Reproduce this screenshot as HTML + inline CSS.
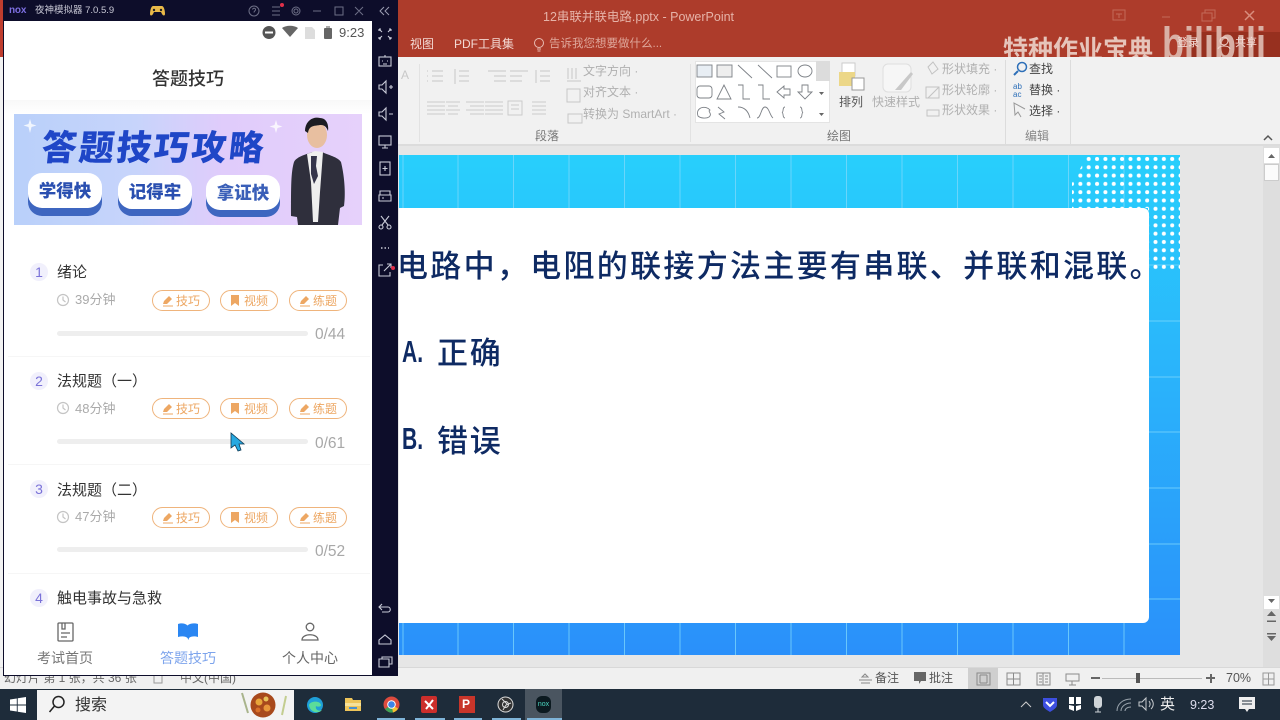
<!DOCTYPE html>
<html lang="zh"><head><meta charset="utf-8"><title>PowerPoint</title>
<style>
*{box-sizing:border-box;margin:0;padding:0}
html,body{width:1280px;height:720px;overflow:hidden;background:#e6e6e6;font-family:"Liberation Sans","Noto Sans CJK SC",sans-serif}
.a{position:absolute;white-space:nowrap}
svg{position:absolute;overflow:visible}
.rt{color:#b0b0b0;font-size:12px;line-height:16px}
.rd{color:#666;font-size:12px;line-height:16px}
.num{position:absolute;left:30px;width:18px;height:18px;border-radius:50%;background:#f1f0fc;color:#7a72d8;font-size:14px;line-height:18px;text-align:center}
.ttl{position:absolute;left:57px;font-size:15px;line-height:20px;color:#333}
.dur{position:absolute;left:75px;font-size:13px;line-height:18px;color:#aaa}
.pill{position:absolute;width:58px;height:21px;border:1px solid #efb47c;border-radius:11px;color:#eda763;font-size:12px;line-height:20px;padding-left:23px;background:#fff}
.bar{position:absolute;left:57px;width:251px;height:5px;border-radius:3px;background:#eee}
.cnt{position:absolute;left:315px;font-size:15.5px;line-height:18px;color:#a8a8a8}
.sep{position:absolute;left:8px;width:362px;height:1px;background:#f6f6f6}
.tab{position:absolute;top:648px;font-size:14px;line-height:20px;text-align:center;width:90px;color:#777}
.sl{position:absolute;white-space:nowrap;font-weight:500;color:#0e2a63;font-family:'Noto Sans CJK SC','Liberation Sans',sans-serif}
.ltr{position:absolute;white-space:nowrap;left:402px;font-size:31px;line-height:46px;font-weight:700;color:#0e2a63;font-family:'Liberation Sans',sans-serif;transform:scaleX(.68);transform-origin:left center}
</style></head><body>

<!-- PowerPoint title bar -->
<div class="a" style="left:0;top:0;width:1280px;height:57px;background:#ad3c2b"></div>
<div class="a" style="left:1190px;top:32px;width:90px;height:25px;background:#97301f"></div>
<div class="a" style="left:543px;top:8px;font-size:12.5px;line-height:18px;color:#e6b3a8">12串联并联电路.pptx - PowerPoint</div>
<div class="a" style="left:410px;top:36px;font-size:12px;line-height:16px;color:#f3d9d3">视图</div>
<div class="a" style="left:454px;top:36px;font-size:12px;line-height:16px;color:#f3d9d3">PDF工具集</div>
<svg style="left:533px;top:37px" width="12" height="15" fill="none" stroke="#e8bdb3"><circle cx="6" cy="6" r="4.5"/><path d="M4 12h4M4.5 14h3"/></svg>
<div class="a" style="left:549px;top:36px;font-size:11.5px;line-height:16px;color:#dfa79b">告诉我您想要做什么...</div>
<svg style="left:1112px;top:9px" width="160" height="16" fill="none" stroke="#c46a58" stroke-width="1"><rect x="1" y="1" width="12" height="10"/><path d="M4 5h6M7 5v4M50 8h8M90 4h10v8H90zM93 4V1h10v8h-3"/><path d="M133 2l9 9M142 2l-9 9" stroke="#d98d7e" stroke-width="1.5"/></svg>
<div class="a" style="left:1003px;top:34px;font-size:25px;line-height:32px;font-weight:700;color:#e6c4ba">特种作业宝典</div>
<div class="a" style="left:1162px;top:21px;font-size:45px;line-height:46px;font-weight:700;color:#d9b0a5;transform:scaleX(.8);transform-origin:left center">bilibili</div>
<div class="a" style="left:1177px;top:36px;font-size:11px;line-height:14px;color:#f3dcd6">登录</div>
<div class="a" style="left:1235px;top:36px;font-size:11px;line-height:14px;color:#f3dcd6">共享</div>
<svg style="left:1217px;top:36px" width="14" height="14" fill="none" stroke="#f0d6cf"><circle cx="7" cy="5" r="4"/><path d="M1 13c1-4 11-4 12 0"/></svg>

<!-- Ribbon -->
<div class="a" style="left:0;top:57px;width:1280px;height:88px;background:#f1f1f1"></div>
<div class="a" style="left:0;top:144px;width:1280px;height:2px;background:#dcdcdc"></div>
<div class="a" style="left:419px;top:64px;width:1px;height:78px;background:#e2e2e2"></div>
<div class="a" style="left:690px;top:64px;width:1px;height:78px;background:#e2e2e2"></div>
<div class="a" style="left:1005px;top:60px;width:1px;height:84px;background:#dcdcdc"></div>
<div class="a" style="left:1070px;top:60px;width:1px;height:84px;background:#dcdcdc"></div>
<div class="a" style="left:401px;top:67px;font-size:12px;line-height:16px;color:#c8c8c8">A</div>
<svg style="left:424px;top:68px" width="140" height="48" fill="none" stroke="#c6c6c6" stroke-width="1"><path d="M3 3h1M3 8h1M3 13h1M8 3h11M8 8h11M8 13h11M35 3h10M35 8h10M35 13h10M31 1v15M64 3h18M70 8h12M70 13h12M86 3h18M86 8h12M86 13h12M116 3h10M116 8h10M116 13h10M112 2v13"/><path d="M3 34h18M3 38h18M3 42h18M3 46h18M22 34h14M24 38h10M22 42h14M24 46h10M42 34h18M46 38h14M42 42h18M46 46h14M61 34h18M61 38h18M61 42h18M61 46h18M84 33h14v14H84zM87 37h8M87 41h8M108 34h14M108 38h14M108 42h14M108 46h14" stroke="#cbcbcb"/></svg>
<svg style="left:566px;top:64px" width="18" height="60" fill="none" stroke="#c6c6c6"><path d="M2 4v11M6 4v11M10 4v11M1 17h14"/><rect x="1" y="25" width="13" height="13"/><rect x="2" y="50" width="14" height="9"/></svg>
<div class="a rt" style="left:583px;top:63px">文字方向 ·</div>
<div class="a rt" style="left:583px;top:84px">对齐文本 ·</div>
<div class="a rt" style="left:583px;top:106px">转换为 SmartArt ·</div>
<div class="a rd" style="left:535px;top:128px;color:#777">段落</div>
<div class="a rd" style="left:827px;top:128px;color:#777">绘图</div>
<div class="a rd" style="left:1025px;top:128px;color:#888">编辑</div>

<!-- Shape gallery -->
<div class="a" style="left:695px;top:61px;width:135px;height:62px;background:#fff;border:1px solid #e4e4e4"></div>
<div class="a" style="left:816px;top:61px;width:14px;height:20px;background:#dcdcdc"></div>
<svg style="left:695px;top:61px" width="135" height="62" fill="none" stroke="#7c8086" stroke-width=".9"><rect x="2" y="4" width="15" height="12" fill="#e8eef4"/><rect x="22" y="4" width="15" height="12" fill="#eee"/><path d="M43 4l14 13M63 4l14 13"/><rect x="82" y="5" width="14" height="11"/><ellipse cx="110" cy="10" rx="7" ry="6"/><rect x="2" y="25" width="15" height="12" rx="3"/><path d="M29 24l-7 14h14zM43 24h5v14h7M63 24h5v14h7M82 31l7-6v3h6v6h-6v3zM107 24h6v7h4l-7 7-7-7h4z"/><path d="M3 55c-3-9 8-11 12-6-3 1 3 4-1 7-3 2-9 1-11-1zM23 46l6 5-5 2 6 5M43 46c6 0 10 3 12 11M62 57c4 0 4-11 8-11s5 9 8 11M90 46c-3 0-1 5-3 5.500 2 .5 0 5.500 3 5.500M105 46c3 0 1 5 3 5.500-2 .5 0 5.500-3 5.500"/><path d="M124 31h5l-2.500 3zM124 52h5l-2.500 3z" fill="#666" stroke="none"/></svg>

<svg style="left:836px;top:62px" width="30" height="30"><rect x="6" y="1" width="13" height="13" fill="#fff" stroke="#ccc"/><rect x="3" y="10" width="16" height="14" fill="#ecd788"/><rect x="16" y="16" width="12" height="12" fill="#fff" stroke="#999"/></svg>
<div class="a rd" style="left:839px;top:94px;color:#555">排列</div>
<svg style="left:881px;top:62px" width="34" height="32" fill="none"><rect x="2" y="2" width="28" height="28" rx="5" fill="#f6f6f6" stroke="#dedede"/><path d="M14 28L30 10l2 2-12 16z" fill="#c8c8c8"/></svg>
<div class="a rt" style="left:872px;top:94px">快速样式</div>
<svg style="left:924px;top:60px" width="18" height="58" fill="none" stroke="#c3c3c3"><path d="M4 7l5-5 5 7-6 5zM2 27h13v11H2zM4 38L15 27M3 50h12v6H3z"/></svg>
<div class="a rt" style="left:942px;top:61px">形状填充 ·</div>
<div class="a rt" style="left:942px;top:82px">形状轮廓 ·</div>
<div class="a rt" style="left:942px;top:102px">形状效果 ·</div>
<svg style="left:1011px;top:60px" width="18" height="60" fill="none"><circle cx="11" cy="7" r="4.500" stroke="#2d6fb8" stroke-width="1.500"/><path d="M7 11l-4 4" stroke="#2d6fb8" stroke-width="2"/><path d="M14 49v0L3 43v0l1 12 3-3 3 5" stroke="#999"/></svg>
<div class="a" style="left:1013px;top:83px;font-size:8px;line-height:8px;color:#2d6fb8">ab<br>ac</div>
<div class="a rd" style="left:1029px;top:61px;color:#444">查找</div>
<div class="a rd" style="left:1029px;top:82px;color:#444">替换 ·</div>
<div class="a rd" style="left:1029px;top:103px;color:#444">选择 ·</div>
<svg style="left:1262px;top:134px" width="12" height="8" fill="none" stroke="#555" stroke-width="1.500"><path d="M2 6l4-4 4 4"/></svg>

<!-- Workspace / slide -->
<div class="a" style="left:0;top:146px;width:1280px;height:521px;background:#e6e6e6"></div>
<div class="a" style="left:399px;top:155px;width:781px;height:500px;background:linear-gradient(180deg,#28cffc 0%,#2ab6fb 40%,#2a90fa 100%)"></div>
<svg style="left:399px;top:155px" width="781" height="500" stroke="#7fd8fb" stroke-width="1" stroke-opacity=".75" fill="none">
<path d="M4 0v500M59 0v500M114.500 0v500M170 0v500M225.500 0v500M281 0v500M336.500 0v500M392 0v500M447.500 0v500M503 0v500M558.500 0v500M614 0v500M669.500 0v500M725 0v500"/>
<path d="M750 110h31M750 166h31M750 222h31M750 277h31M750 333h31M750 389h31M750 444h31"/>
</svg>
<svg style="left:1068px;top:155px" width="112" height="120" fill="#fff">
<defs><pattern id="dots" width="8.350" height="8.300" patternUnits="userSpaceOnUse"><circle cx="4" cy="4" r="2"/></pattern>
<mask id="m"><path d="M20 0H112V116H80V53H4V28z" fill="#fff"/></mask></defs>
<rect width="112" height="120" fill="url(#dots)" mask="url(#m)"/></svg>
<div class="a" style="left:399px;top:208px;width:750px;height:415px;background:#fff;border-radius:0 6px 6px 0"></div>
<div class="sl" style="left:397px;top:241px;font-size:31px;line-height:46px;letter-spacing:2.300px">电路中，电阻的联接方法主要有串联、并联和混联。</div>
<div class="ltr" style="top:329px">A.</div>
<div class="sl" style="left:437px;top:328px;font-size:31px;line-height:46px;letter-spacing:1.700px">正确</div>
<div class="ltr" style="top:416px">B.</div>
<div class="sl" style="left:437px;top:416px;font-size:31px;line-height:46px;letter-spacing:1.700px">错误</div>

<!-- Scrollbar -->
<div class="a" style="left:1263px;top:146px;width:17px;height:521px;background:#dedede"></div>
<div class="a" style="left:1264px;top:148px;width:15px;height:15px;background:#fff"></div>
<div class="a" style="left:1264px;top:164px;width:15px;height:17px;background:#fbfbfb;border:1px solid #ccc"></div>
<div class="a" style="left:1264px;top:596px;width:15px;height:13px;background:#fff"></div>
<svg style="left:1264px;top:150px" width="15" height="500" fill="#666"><path d="M4 8l3.500-4 3.500 4zM4 449l3.500 4 3.500-4zM3 466h9l-4.500-5zM3 472h9v-1.500H3zM3 483h9v1.500H3zM3 486h9l-4.500 5z"/></svg>

<!-- Status bar -->
<div class="a" style="left:0;top:667px;width:1280px;height:22px;background:#f0f0f0;border-top:1px solid #d8d8d8"></div>
<div class="a" style="left:4px;top:671px;font-size:12px;line-height:15px;color:#666">幻灯片 第 1 张，共 36 张</div>
<div class="a" style="left:180px;top:671px;font-size:12px;line-height:15px;color:#666">中文(中国)</div>
<svg style="left:153px;top:672px" width="15" height="12" fill="none" stroke="#999"><path d="M1 1h8v10H1zM9 3h4"/></svg>
<svg style="left:858px;top:672px" width="15" height="14" fill="none" stroke="#888"><path d="M1 8h13M3 11h9M7 2l-3 3h6z"/></svg>
<div class="a rd" style="left:875px;top:670px;color:#555">备注</div>
<svg style="left:913px;top:671px" width="14" height="14"><path d="M1 1h12v9H8l-2 3v-3H1z" fill="#666"/></svg>
<div class="a rd" style="left:929px;top:670px;color:#555">批注</div>
<div class="a" style="left:968px;top:668px;width:30px;height:21px;background:#cfcfcf"></div>
<svg style="left:975px;top:671px" width="96" height="16" fill="none" stroke="#8a8a8a"><rect x="2" y="2" width="13" height="12"/><path d="M5 4v8M12 4v8M5 4h7M5 12h7"/><rect x="32" y="2" width="13" height="12"/><path d="M32 8h13M38.500 2v12"/><rect x="62" y="2" width="13" height="12"/><path d="M68 2v12M64 5h3M64 8h3M64 11h3M70 5h3M70 8h3M70 11h3"/><path d="M91 3h13v7H91zM97 10v4M94 14h7"/></svg>
<div class="a" style="left:1091px;top:677px;width:9px;height:2px;background:#666"></div>
<div class="a" style="left:1102px;top:678px;width:100px;height:1px;background:#bbb"></div>
<div class="a" style="left:1136px;top:673px;width:4px;height:10px;background:#555"></div>
<div class="a" style="left:1206px;top:677px;width:9px;height:2px;background:#666"></div>
<div class="a" style="left:1209.500px;top:673.500px;width:2px;height:9px;background:#666"></div>
<div class="a" style="left:1226px;top:670px;font-size:12.500px;line-height:16px;color:#555">70%</div>
<svg style="left:1262px;top:672px" width="14" height="14" fill="none" stroke="#999"><rect x="1" y="1" width="11" height="12"/><path d="M1 7h11M6.500 1v12"/></svg>

<!-- Taskbar -->
<div class="a" style="left:0;top:689px;width:1280px;height:31px;background:#1e2c3a"></div>
<svg style="left:10px;top:697px" width="16" height="16" fill="#fff"><path d="M0 2.500l6.800-1v6H0zM7.700 1.300L16 0v7.500H7.700zM0 8.500h6.800v6l-6.800-1zM7.700 8.500H16V16l-8.300-1.200z"/></svg>
<div class="a" style="left:37px;top:690px;width:257px;height:30px;background:#f3f3f3"></div>
<svg style="left:48px;top:695px" width="20" height="20" fill="none" stroke="#222" stroke-width="1.500"><circle cx="10.500" cy="7" r="5.500"/><path d="M6.500 11L1.500 17"/></svg>
<div class="a" style="left:75px;top:695px;font-size:16px;line-height:22px;color:#333">搜索</div>
<svg style="left:240px;top:690px" width="50" height="30"><path d="M2 3l6 20" stroke="#a9b48c" stroke-width="2" fill="none"/><circle cx="23" cy="15" r="12.500" fill="#a8491c"/><circle cx="19" cy="12" r="3.500" fill="#e8a53a"/><circle cx="27" cy="18" r="3.500" fill="#e8963a"/><circle cx="26" cy="9" r="2.500" fill="#e8c25a"/><circle cx="18" cy="20" r="2.500" fill="#d9702a"/><path d="M46 6l-4 19" stroke="#c3cd90" stroke-width="2" fill="none"/></svg>
<svg style="left:306px;top:696px" width="18" height="18"><circle cx="9" cy="9" r="8" fill="#1f9fd8"/><path d="M3 9c1-4 11-5 12 0 0 2-4 2-5 1-1 3 2 6 6 4-3 4-12 3-13-5z" fill="#5bdc9a"/></svg>
<svg style="left:345px;top:697px" width="16" height="15"><path d="M0 1h7l1 2h8v11H0z" fill="#eec55a"/><rect x="0" y="6" width="16" height="3" fill="#f6e19a"/><rect x="4" y="10" width="8" height="2" fill="#4a8fd0"/></svg>
<svg style="left:383px;top:696px" width="17" height="17"><circle cx="8.500" cy="8.500" r="8" fill="#dd4b3e"/><path d="M8.500 8.500L2 13a8 8 0 0 0 8 3.500z" fill="#3da355"/><path d="M8.500 8.500l6.500 4a8 8 0 0 1-5 4z" fill="#f3c332"/><circle cx="8.500" cy="8.500" r="3.800" fill="#3d83e8" stroke="#fff"/></svg>
<div class="a" style="left:421px;top:696px;width:16px;height:17px;background:#cc2e2b;border-radius:2px"></div>
<svg style="left:421px;top:696px" width="16" height="17" stroke="#fff" stroke-width="2" fill="none"><path d="M4 5l8 8M12 4L5 13"/></svg>
<div class="a" style="left:459px;top:696px;width:16px;height:17px;background:#c8352a;color:#fff;font-size:12px;line-height:17px;font-weight:700;padding-left:3px">P</div>
<svg style="left:497px;top:696px" width="17" height="17" fill="none" stroke="#ddd"><circle cx="8.500" cy="8.500" r="7.500" fill="#333"/><circle cx="8.500" cy="8.500" r="3"/><path d="M5 3l5 5M14 7l-5 2M6 14l3-5"/></svg>
<div class="a" style="left:525px;top:689px;width:37px;height:31px;background:#4a5560"></div>
<div class="a" style="left:536px;top:696px;width:15px;height:17px;border-radius:6px;background:#0c1a20;color:#4bd6c0;font-size:7px;line-height:17px;text-align:center">nox</div>
<div class="a" style="left:377px;top:718px;width:28px;height:2px;background:#7fb4d8"></div>
<div class="a" style="left:415px;top:718px;width:30px;height:2px;background:#7fb4d8"></div>
<div class="a" style="left:454px;top:718px;width:28px;height:2px;background:#7fb4d8"></div>
<div class="a" style="left:492px;top:718px;width:29px;height:2px;background:#7fb4d8"></div>
<div class="a" style="left:527px;top:718px;width:35px;height:2px;background:#7fb4d8"></div>

<svg style="left:1019px;top:698px" width="14" height="12" fill="none" stroke="#ccc"><path d="M2 9l5-5 5 5"/></svg>
<svg style="left:1043px;top:696px" width="14" height="16"><path d="M0 2h14v7c0 3-4 5-7 7-3-2-7-4-7-7z" fill="#3d4fe0"/><path d="M3 6l4 4 4-4" stroke="#fff" stroke-width="2" fill="none"/></svg>
<svg style="left:1068px;top:696px" width="14" height="16" fill="#fff"><path d="M1 1h5v7H1zM8 1h5v7H8zM1 9l5 1v5l-5-2zM13 9l-5 1v5l5-2z"/></svg>
<svg style="left:1092px;top:696px" width="12" height="17"><rect x="2" y="0" width="8" height="12" rx="3" fill="#cfd4d8"/><path d="M6 12v4M3 16h6" stroke="#cfd4d8"/></svg>
<svg style="left:1116px;top:698px" width="16" height="14" fill="none" stroke="#9aa4ad"><path d="M1 13C1 6 7 1 15 1M5 13c0-4 4-8 10-8M9 13c0-2 2-4 6-4"/></svg>
<svg style="left:1138px;top:697px" width="16" height="14" fill="none" stroke="#c8ccd0"><path d="M1 5h3l4-4v12l-4-4H1zM11 4c1.500 2 1.500 4 0 6M13 2c3 3 3 7 0 10"/></svg>
<div class="a" style="left:1160px;top:695px;font-size:15px;line-height:20px;color:#eee">英</div>
<div class="a" style="left:1190px;top:697px;font-size:12.500px;line-height:16px;color:#dde">9:23</div>
<svg style="left:1238px;top:696px" width="18" height="18" fill="#eee"><path d="M1 1h16v12h-6l-2 3-2-3H1z"/><path d="M4 5h10M4 8h10" stroke="#1e2c3a"/></svg>

<!-- Nox frame -->
<div class="a" style="left:0;top:0;width:4px;height:57px;background:#bf3d2e"></div>
<div class="a" style="left:0;top:57px;width:4px;height:610px;background:#f2f2f2"></div>
<div class="a" style="left:3px;top:0;width:395px;height:676px;background:#0d0d2a"></div>
<div class="a" style="left:9px;top:4px;font-size:10px;line-height:13px;color:#7d6fe0;font-weight:700;letter-spacing:-.2px">nox</div>
<div class="a" style="left:35px;top:4px;font-size:9.500px;line-height:14px;color:#c9c9d6">夜神模拟器 7.0.5.9</div>
<svg style="left:150px;top:5px" width="16" height="12"><path d="M3 1h9c2 0 3 5 3 8 0 2-2 2-3 0l-1-2H4L3 9C2 11 0 11 0 9c0-3 1-8 3-8z" fill="#e9b949"/><circle cx="4" cy="5" r="1.200" fill="#222"/><circle cx="11" cy="5" r="1.200" fill="#222"/></svg>
<svg style="left:248px;top:4px" width="145" height="14" fill="none" stroke="#6d6f86" stroke-width="1"><circle cx="6" cy="7" r="5"/><path d="M4.500 5.500c.5-2 3.500-1.500 3 .5-.3 1-1.500 1-1.500 2.500"/><path d="M24 3h8M24 7h8M24 11h8M65 7h8M87 3h8v8h-8zM107 3l8 8M115 3l-8 8"/><circle cx="48" cy="7" r="4"/><circle cx="48" cy="7" r="2"/><path d="M136 3l-4 4 4 4M141 3l-4 4 4 4" stroke="#9a9cb0"/></svg>
<div class="a" style="left:280px;top:3px;width:4px;height:4px;border-radius:50%;background:#e0304a"></div>

<!-- Phone screen -->
<div class="a" style="left:4px;top:21px;width:368px;height:654px;background:#fff"></div>
<div class="a" style="left:4px;top:100px;width:368px;height:14px;background:linear-gradient(#f8f8f8,#fff)"></div>
<svg style="left:261px;top:25px" width="76" height="15"><circle cx="8" cy="7.500" r="6.500" fill="#555"/><rect x="4" y="6.500" width="8" height="2" fill="#fff"/><path d="M21 3c4-3 12-3 16 0l-8 9z" fill="#666"/><path d="M44 2h7l3 3v9H44z" fill="#ddd"/><rect x="63" y="3" width="8" height="11" rx="1" fill="#666"/><rect x="65" y="1" width="4" height="2" fill="#aaa"/></svg>
<div class="a" style="left:339px;top:24px;font-size:13px;line-height:17px;color:#555">9:23</div>
<div class="a" style="left:152px;top:66px;font-size:18px;line-height:24px;color:#333;font-weight:500;font-family:'Noto Sans CJK SC',sans-serif">答题技巧</div>

<!-- Banner -->
<div class="a" style="left:14px;top:114px;width:348px;height:111px;background:linear-gradient(90deg,#b9d0fa 0%,#c7d4fb 35%,#e0ccfb 60%,#e6d1fb 100%)"></div>
<div class="a" style="left:42px;top:125px;font-size:35px;line-height:42px;font-weight:900;color:#1f46c7;letter-spacing:2.400px;font-family:'Noto Sans CJK SC',sans-serif;transform:skewX(-6deg)">答题技巧攻略</div>
<div class="a" style="left:28px;top:181px;width:74px;height:35px;background:#3e66c0;border-radius:14px"></div>
<div class="a" style="left:28px;top:173px;width:74px;height:35px;background:#fff;border-radius:14px;color:#2a4fb0;font-size:17.500px;line-height:35px;text-align:center;font-weight:900;font-family:'Noto Sans CJK SC',sans-serif">学得快</div>
<div class="a" style="left:118px;top:183px;width:74px;height:33px;background:#3e66c0;border-radius:14px"></div>
<div class="a" style="left:118px;top:175px;width:74px;height:34px;background:#fff;border-radius:14px;color:#2a4fb0;font-size:17.500px;line-height:33px;text-align:center;font-weight:900;font-family:'Noto Sans CJK SC',sans-serif">记得牢</div>
<div class="a" style="left:206px;top:184px;width:74px;height:33px;background:#3e66c0;border-radius:14px"></div>
<div class="a" style="left:206px;top:175px;width:74px;height:35px;background:#fff;border-radius:14px;color:#3a5fb8;font-size:17.500px;line-height:35px;text-align:center;font-weight:900;font-family:'Noto Sans CJK SC',sans-serif">拿证快</div>
<svg style="left:290px;top:116px" width="56" height="110"><path d="M1 100C1 70 1 56 4 46c3-6 14-8 18-10h10c6 3 16 5 19 10 3 12 5 30 3 44l-4 2-2 17H8l-1-8z" fill="#2f2f3c"/><path d="M17 38l8-3 8 1-3 40-2 30h-5l-2-40z" fill="#eee"/><path d="M21 40l6 0-1 10 2 10-4 8-3-10z" fill="#33334a"/><ellipse cx="27" cy="19" rx="10" ry="13" fill="#e8bfa0"/><path d="M15 15c0-10 8-15 15-13 6 0 9 6 8 13-2-5-4-6-8-6-5 1-11 0-12 8z" fill="#1c1c22"/></svg>
<svg style="left:24px;top:119px" width="260" height="16" fill="#fff" opacity=".8"><path d="M6 0l1.500 5 5 1.500-5 1.500L6 14 4.500 8-.5 6.500l5-1.500zM252 1l1.500 5 5 1.500-5 1.500-1.500 5-1.500-5-5-1.500 5-1.500z"/></svg>

<!-- Rows -->
<div class="num" style="top:263px">1</div><div class="ttl" style="top:263px">绪论</div>
<svg style="left:56px;top:293px" width="14" height="14" fill="none" stroke="#c4c4c4" stroke-width="1.200"><circle cx="7" cy="7" r="5.500"/><path d="M7 3.500V7l2.500 2"/></svg>
<div class="dur" style="top:291px">39分钟</div>
<div class="pill" style="left:152px;top:290px">技巧</div><div class="pill" style="left:220px;top:290px">视频</div><div class="pill" style="left:289px;top:290px">练题</div>
<div class="bar" style="top:331px"></div><div class="cnt" style="top:326px">0/44</div>
<div class="sep" style="top:356px"></div>

<div class="num" style="top:372px">2</div><div class="ttl" style="top:372px">法规题（一）</div>
<svg style="left:56px;top:401px" width="14" height="14" fill="none" stroke="#c4c4c4" stroke-width="1.200"><circle cx="7" cy="7" r="5.500"/><path d="M7 3.500V7l2.500 2"/></svg>
<div class="dur" style="top:400px">48分钟</div>
<div class="pill" style="left:152px;top:398px">技巧</div><div class="pill" style="left:220px;top:398px">视频</div><div class="pill" style="left:289px;top:398px">练题</div>
<div class="bar" style="top:439px"></div><div class="cnt" style="top:435px">0/61</div>
<div class="sep" style="top:464px"></div>

<div class="num" style="top:480px">3</div><div class="ttl" style="top:481px">法规题（二）</div>
<svg style="left:56px;top:510px" width="14" height="14" fill="none" stroke="#c4c4c4" stroke-width="1.200"><circle cx="7" cy="7" r="5.500"/><path d="M7 3.500V7l2.500 2"/></svg>
<div class="dur" style="top:508px">47分钟</div>
<div class="pill" style="left:152px;top:507px">技巧</div><div class="pill" style="left:220px;top:507px">视频</div><div class="pill" style="left:289px;top:507px">练题</div>
<div class="bar" style="top:547px"></div><div class="cnt" style="top:543px">0/52</div>
<div class="sep" style="top:573px"></div>

<div class="num" style="top:589px">4</div><div class="ttl" style="top:589px">触电事故与急救</div>

<!-- Pill icons -->
<svg style="left:0;top:0" width="400" height="540" fill="#eda763">
<path d="M163 304l1-3 5-5 3 3-5 5zM163 305.500h10v1h-10z"/><path d="M231 295h8v11l-4-3-4 3z"/><path d="M300 304l1-3 5-5 3 3-5 5zM300 305.500h10v1h-10z"/>
<path d="M163 412l1-3 5-5 3 3-5 5zM163 413.500h10v1h-10z"/><path d="M231 403h8v11l-4-3-4 3z"/><path d="M300 412l1-3 5-5 3 3-5 5zM300 413.500h10v1h-10z"/>
<path d="M163 521l1-3 5-5 3 3-5 5zM163 522.500h10v1h-10z"/><path d="M231 512h8v11l-4-3-4 3z"/><path d="M300 521l1-3 5-5 3 3-5 5zM300 522.500h10v1h-10z"/>
</svg>

<!-- Bottom nav -->
<div class="a" style="left:4px;top:612px;width:368px;height:63px;background:#fff"></div>
<svg style="left:57px;top:622px" width="17" height="20" fill="none" stroke="#666" stroke-width="1.300"><rect x="1" y="1" width="15" height="18" rx="1"/><path d="M5 1v6h3V1M4 11h9M4 15h6"/></svg>
<svg style="left:178px;top:623px" width="20" height="18"><path d="M0 1c3-1 7-1 9.500 1.500C12 0 17 0 20 1v13c-3-1-7-1-9 1l-.5 2-1-2c-2-2-6-2-9.500-1z" fill="#2a86f2"/></svg>
<svg style="left:300px;top:622px" width="20" height="20" fill="none" stroke="#666" stroke-width="1.300"><circle cx="10" cy="5" r="3.800"/><path d="M2 18c0-7 16-7 16 0z"/></svg>
<div class="tab" style="left:20px">考试首页</div>
<div class="tab" style="left:143px;color:#7da4ec">答题技巧</div>
<div class="tab" style="left:265px;color:#666">个人中心</div>

<!-- Nox toolbar icons -->
<svg style="left:376px;top:26px" width="18" height="250" fill="none" stroke="#c9cbd8" stroke-width="1.100">
<path d="M3 3l3 3M3 3h2M3 3v2M15 3l-3 3M15 3h-2M15 3v2M3 13l3-3M3 13h2M3 13v-2M15 13l-3-3M15 13h-2M15 13v-2"/>
<rect x="3" y="31" width="12" height="9"/><path d="M6 35h1M11 35h1M7 38h4M9 29v2"/>
<path d="M3 59h3l4-4v12l-4-4H3zM13 61h4M15 59v4"/>
<path d="M3 86h3l4-4v12l-4-4H3zM13 88h4"/>
<rect x="3" y="110" width="12" height="9"/><path d="M6 122h6M9 119v3"/>
<rect x="4" y="136" width="10" height="13"/><path d="M9 140v5M6.500 142.500h5"/>
<path d="M4 165h10v4H4zM3 169h12v6H3zM6 172h2"/>
<circle cx="5" cy="201" r="2"/><circle cx="13" cy="201" r="2"/><path d="M6 199l7-9M12 199l-7-9"/>
<path d="M5 222h8" stroke-dasharray="1.500 2" stroke-width="1.500"/>
<path d="M14 246v4H3v-11h4M8 245l7-7M11 238h4v4"/>
</svg>
<div class="a" style="left:391px;top:266px;width:4px;height:4px;border-radius:50%;background:#e0304a"></div>
<svg style="left:377px;top:600px" width="16" height="70" fill="none" stroke="#c9cbd8" stroke-width="1.100"><path d="M5 4L2 7l3 3M2 7h9c3 0 3 5 0 5H5"/><path d="M2 40l6-5 6 5v4H2z"/><path d="M2 59h10v8H2zM5 59v-2h10v7h-3"/></svg>

<!-- Cursor -->
<svg style="left:231px;top:433px" width="13" height="20"><path d="M0 0v15l4-3 3 6 3-1-2-6h5z" fill="#27a9e1" stroke="#0e3a55" stroke-width=".8"/></svg>
</body></html>
